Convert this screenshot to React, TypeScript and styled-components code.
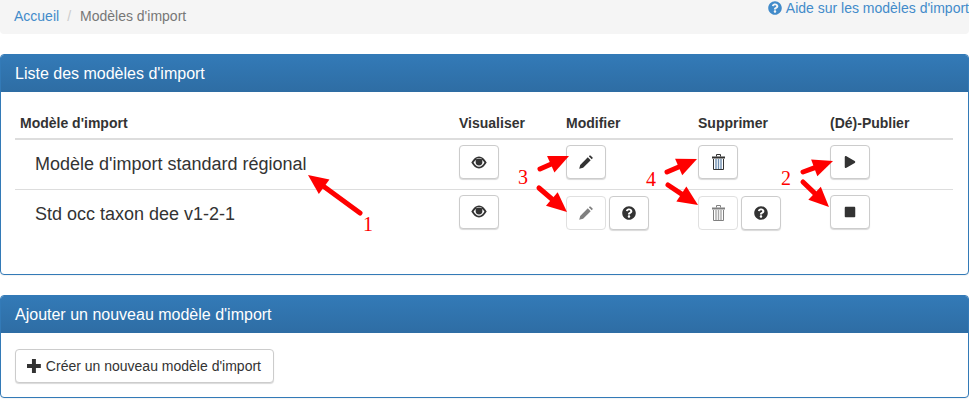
import styled, { createGlobalStyle } from "styled-components"
import { FaPlay, FaQuestionCircle, FaStop } from "react-icons/fa"

const GlobalStyle = createGlobalStyle`
    html, body {
        margin: 0;
        padding: 0;
        background: #fff;
    }
    * {
        box-sizing: border-box;
    }
    body {
        font-family: "Liberation Sans", Arial, sans-serif;
        font-size: 14px;
        line-height: 20px;
        color: #333;
    }
`

const EyeIcon = () => (
    <svg width="16" height="13" viewBox="0 0 16 13">
        <path d="M0.3 6.5C2.6 2.6 5 0.5 8 0.5s5.4 2.1 7.7 6c-2.3 3.9-4.7 6-7.7 6s-5.4-2.1-7.7-6Z" fill="currentColor" />
        <path d="M2.6 6.5C4 4.4 5.8 3 8 3s4 1.4 5.4 3.5C12 9 10.2 10.8 8 10.8S4 9 2.6 6.5Z" fill="#fff" />
        <circle cx="8" cy="6" r="3.4" fill="currentColor" />
        <path d="M4.6 3.1C5.4 2.4 6.6 2 8 2s2.6 0.4 3.4 1.1C10.4 2.8 9.2 2.6 8 2.6s-2.4 0.2-3.4 0.5Z" fill="#fff" />
    </svg>
)

const PencilIcon = () => (
    <svg width="14" height="14" viewBox="0 0 14 14">
        <path d="M0.2 13.8 1.2 9.9 8.8 2.3 11.7 5.2 4.1 12.8Z" fill="currentColor" />
        <path d="M9.8 1.3 10.7 0.4Q11 0.1 11.4 0.4L13.6 2.6Q13.9 3 13.6 3.3L12.7 4.2Z" fill="currentColor" />
    </svg>
)

const TrashIcon = ({ stripe }: { stripe: string }) => (
    <svg width="13" height="16" viewBox="0 0 13 16">
        <path d="M4.5 2.5V0.5h4v2" fill="none" stroke="currentColor" strokeWidth="1" />
        <rect x="0" y="2.5" width="13" height="2" fill="currentColor" />
        <path d="M1.5 5v10.5h10V5" fill="none" stroke="currentColor" strokeWidth="1" />
        <path d="M4 5v10M6.5 5v10M9 5v10" stroke={stripe} strokeWidth="1.4" />
    </svg>
)

const PlusIcon = () => (
    <svg width="14" height="14" viewBox="0 0 14 14">
        <path d="M5 0h4v5h5v4H9v5H5V9H0V5h5Z" fill="currentColor" />
    </svg>
)

const arrows = [
    { from: [360, 213], to: [308, 175] },
    { from: [540, 169], to: [569, 156] },
    { from: [539, 188], to: [567, 212] },
    { from: [667, 172], to: [697, 159] },
    { from: [668, 185], to: [698, 205] },
    { from: [803, 172], to: [833, 161] },
    { from: [803, 182], to: [829, 207] },
]

const Arrow = ({ from, to }: { from: number[]; to: number[] }) => {
    const dx = to[0] - from[0]
    const dy = to[1] - from[1]
    const len = Math.hypot(dx, dy)
    const ux = dx / len
    const uy = dy / len
    const bx = to[0] - ux * 20
    const by = to[1] - uy * 20
    const head = [
        `${to[0]},${to[1]}`,
        `${bx - uy * 9},${by + ux * 9}`,
        `${bx + uy * 9},${by - ux * 9}`,
    ].join(" ")
    return (
        <>
            <line x1={from[0]} y1={from[1]} x2={bx} y2={by} stroke="#f00" strokeWidth="5" strokeLinecap="round" />
            <polygon points={head} fill="#f00" />
        </>
    )
}

export default function App() {
    return (
        <Page>
            <GlobalStyle />
            <Breadcrumb>
                <HelpLink href="#"><FaQuestionCircle size={14} /> Aide sur les modèles d'import</HelpLink>
                <Crumbs>
                    <CrumbLink href="#">Accueil</CrumbLink>
                    <Separator>/</Separator>
                    <CurrentCrumb>Modèles d'import</CurrentCrumb>
                </Crumbs>
            </Breadcrumb>

            <Panel $spaced>
                <PanelHeading>Liste des modèles d'import</PanelHeading>
                <ListBody>
                    <ModelTable>
                        <colgroup>
                            <col style={{ width: 439 }} />
                            <col style={{ width: 107 }} />
                            <col style={{ width: 132 }} />
                            <col style={{ width: 132 }} />
                            <col style={{ width: 128 }} />
                        </colgroup>
                        <thead>
                            <tr>
                                <HeadCell>Modèle d'import</HeadCell>
                                <HeadCell>Visualiser</HeadCell>
                                <HeadCell>Modifier</HeadCell>
                                <HeadCell>Supprimer</HeadCell>
                                <HeadCell>(Dé)-Publier</HeadCell>
                            </tr>
                        </thead>
                        <tbody>
                            <tr>
                                <NameCell>Modèle d'import standard régional</NameCell>
                                <ActionCell><IconButton><EyeIcon /></IconButton></ActionCell>
                                <ActionCell><IconButton><PencilIcon /></IconButton></ActionCell>
                                <ActionCell><IconButton><TrashIcon stripe="#6f8fb0" /></IconButton></ActionCell>
                                <ActionCell><IconButton><FaPlay size={12} /></IconButton></ActionCell>
                            </tr>
                            <tr>
                                <NameCell>Std occ taxon dee v1-2-1</NameCell>
                                <ActionCell><IconButton><EyeIcon /></IconButton></ActionCell>
                                <ActionCell>
                                    <ButtonGroup>
                                        <IconButton $disabled><PencilIcon /></IconButton>
                                        <IconButton><FaQuestionCircle size={14} /></IconButton>
                                    </ButtonGroup>
                                </ActionCell>
                                <ActionCell>
                                    <ButtonGroup>
                                        <IconButton $disabled><TrashIcon stripe="#a8a8a8" /></IconButton>
                                        <IconButton><FaQuestionCircle size={14} /></IconButton>
                                    </ButtonGroup>
                                </ActionCell>
                                <ActionCell><IconButton><FaStop size={12} /></IconButton></ActionCell>
                            </tr>
                        </tbody>
                    </ModelTable>
                </ListBody>
            </Panel>

            <Panel>
                <PanelHeading>Ajouter un nouveau modèle d'import</PanelHeading>
                <AddBody>
                    <CreateButton><PlusIcon /> Créer un nouveau modèle d'import</CreateButton>
                </AddBody>
            </Panel>

            <Annotations width="970" height="400" viewBox="0 0 970 400">
                {arrows.map((a, i) => <Arrow key={i} from={a.from} to={a.to} />)}
            </Annotations>
            <Mark $x={363} $y={214}>1</Mark>
            <Mark $x={518} $y={167}>3</Mark>
            <Mark $x={646} $y={169}>4</Mark>
            <Mark $x={781} $y={168}>2</Mark>
        </Page>
    )
}

const Page = styled.div`
    position: relative;
    width: 969px;
    height: 400px;
    overflow: hidden;
`

const Breadcrumb = styled.div`
    height: 34px;
    background-color: #f5f5f5;
    border-radius: 0 0 4px 4px;
    margin-bottom: 20px;
`

const HelpLink = styled.a`
    float: right;
    margin-top: -2px;
    color: #428bca;
    text-decoration: none;
    display: flex;
    align-items: center;
    gap: 4px;
`

const Crumbs = styled.div`
    padding: 6px 14px;
    display: flex;
`

const CrumbLink = styled.a`
    color: #428bca;
    text-decoration: none;
`

const Separator = styled.span`
    color: #ccc;
    padding: 0 9px 0 8px;
`

const CurrentCrumb = styled.span`
    color: #777;
`

const Panel = styled.section<{ $spaced?: boolean }>`
    border: 1px solid #337ab7;
    border-radius: 4px;
    background: #fff;
    margin-bottom: ${props => props.$spaced ? "20px" : "0"};
    box-shadow: 0 1px 1px rgba(0, 0, 0, 0.05);
    overflow: hidden;
`

const PanelHeading = styled.h3`
    margin: 0;
    height: 37px;
    padding: 0 14px;
    font-size: 16px;
    font-weight: 400;
    line-height: 38px;
    color: #fff;
    background-image: linear-gradient(to bottom, #337ab7 0, #2e6da4 100%);
`

const ListBody = styled.div`
    height: 182px;
    padding: 15px 14px 0;
`

const ModelTable = styled.table`
    width: 938px;
    table-layout: fixed;
    border-collapse: collapse;
`

const HeadCell = styled.th`
    height: 32px;
    padding: 5px;
    text-align: left;
    vertical-align: bottom;
    font-weight: 700;
    border-bottom: 2px solid #ddd;
`

const NameCell = styled.td`
    height: 50px;
    padding: 10px 5px 0 20px;
    font-size: 18px;
    line-height: 28px;
    vertical-align: top;
    border-bottom: 1px solid #ddd;
    tr:last-child & {
        border-bottom: 0;
    }
`

const ActionCell = styled.td`
    padding: 5px;
    vertical-align: top;
    border-bottom: 1px solid #ddd;
    tr:last-child & {
        border-bottom: 0;
    }
`

const ButtonGroup = styled.div`
    display: flex;
    gap: 3px;
    margin-top: 1px;
`

const IconButton = styled.button<{ $disabled?: boolean }>`
    width: 40px;
    height: 34px;
    padding: 0;
    display: flex;
    align-items: center;
    justify-content: center;
    color: ${props => props.$disabled ? "#808080" : "#333"};
    background: #fff;
    border: 1px solid ${props => props.$disabled ? "#e0e0e0" : "#ccc"};
    border-radius: 4px;
    box-shadow: ${props => props.$disabled ? "none" : "0 1px 1px rgba(0, 0, 0, 0.15)"};
`

const AddBody = styled.div`
    padding: 16px 14px 14px;
`

const CreateButton = styled.button`
    display: flex;
    align-items: center;
    gap: 5px;
    width: 259px;
    height: 34px;
    padding: 0 12px 0 11px;
    font-family: "Liberation Sans", Arial, sans-serif;
    font-size: 14px;
    color: #333;
    background: #fff;
    border: 1px solid #ccc;
    border-radius: 4px;
    box-shadow: 0 1px 1px rgba(0, 0, 0, 0.15);
    white-space: nowrap;
`

const Annotations = styled.svg`
    position: absolute;
    left: 0;
    top: 0;
    pointer-events: none;
`

const Mark = styled.span<{ $x: number; $y: number }>`
    position: absolute;
    left: ${props => props.$x}px;
    top: ${props => props.$y}px;
    font-family: "Liberation Serif", "Times New Roman", serif;
    font-size: 20px;
    line-height: 20px;
    color: #f00;
`
